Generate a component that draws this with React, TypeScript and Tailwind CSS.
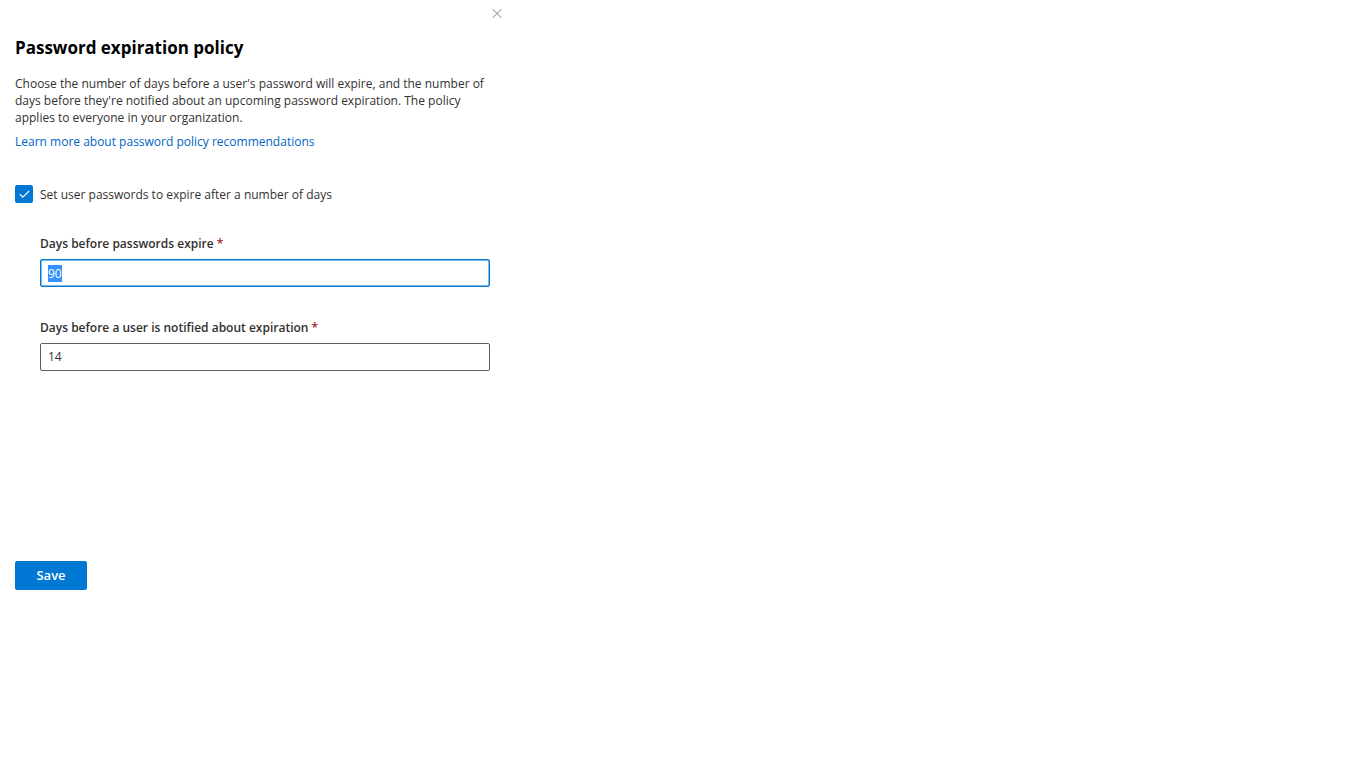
import { X, Check } from "lucide-react";

const FONT = { fontFamily: '"Segoe UI", "Open Sans", "Noto Sans", sans-serif' };

function Field({
  label,
  value,
  focused,
}: {
  label: string;
  value: string;
  focused?: boolean;
}) {
  return (
    <div className="flex flex-col">
      <label className="text-[12px] leading-[20px] font-semibold text-[#323130]">
        {label} <span className="text-[#a4262c]">*</span>
      </label>
      <div
        className={
          "mt-[5px] flex h-[28px] w-[450px] items-center rounded-[2px] border px-[7px] text-[12px] text-[#323130] " +
          (focused ? "border-[#0078d4] shadow-[inset_0_0_0_0.5px_#0078d4]" : "border-[#605e5c]")
        }
      >
        {focused ? (
          <span className="bg-[#3390ff] leading-[17px] text-white">{value}</span>
        ) : (
          <span>{value}</span>
        )}
      </div>
    </div>
  );
}

export default function App() {
  return (
    <div className="min-h-screen bg-white" style={FONT}>
      <div className="relative w-[520px] px-[15px]">
        <button className="absolute top-[5px] left-[489px] flex h-[16px] w-[16px] items-center justify-center text-[#605e5c]">
          <X size={17} strokeWidth={1.2} />
        </button>

        <h1 className="pt-[35px] text-[17px] leading-[26px] font-bold text-black">
          Password expiration policy
        </h1>

        <p className="mt-[14px] w-[475px] text-[12px] leading-[17px] text-[#323130]">
          Choose the number of days before a user's password will expire, and the number of
          days before they're notified about an upcoming password expiration. The policy
          applies to everyone in your organization.
        </p>

        <a className="mt-[7px] block text-[12px] leading-[17px] text-[#0066c4]" href="#">
          Learn more about password policy recommendations
        </a>

        <label className="mt-[35px] flex items-start gap-[7px]">
          <span className="flex h-[18px] w-[18px] items-center justify-center rounded-[2px] bg-[#0078d4]">
            <Check size={13} strokeWidth={2} className="text-white" />
          </span>
          <span className="pt-[1px] text-[12px] leading-[18px] text-[#323130]">
            Set user passwords to expire after a number of days
          </span>
        </label>

        <div className="mt-[30px] ml-[25px] flex flex-col gap-[31px]">
          <Field label="Days before passwords expire" value="90" focused />
          <Field label="Days before a user is notified about expiration" value="14" />
        </div>

        <button className="mt-[190px] flex h-[29px] w-[72px] items-center justify-center rounded-[2px] bg-[#0078d4] text-[13px] font-semibold text-white">
          Save
        </button>
      </div>
    </div>
  );
}
